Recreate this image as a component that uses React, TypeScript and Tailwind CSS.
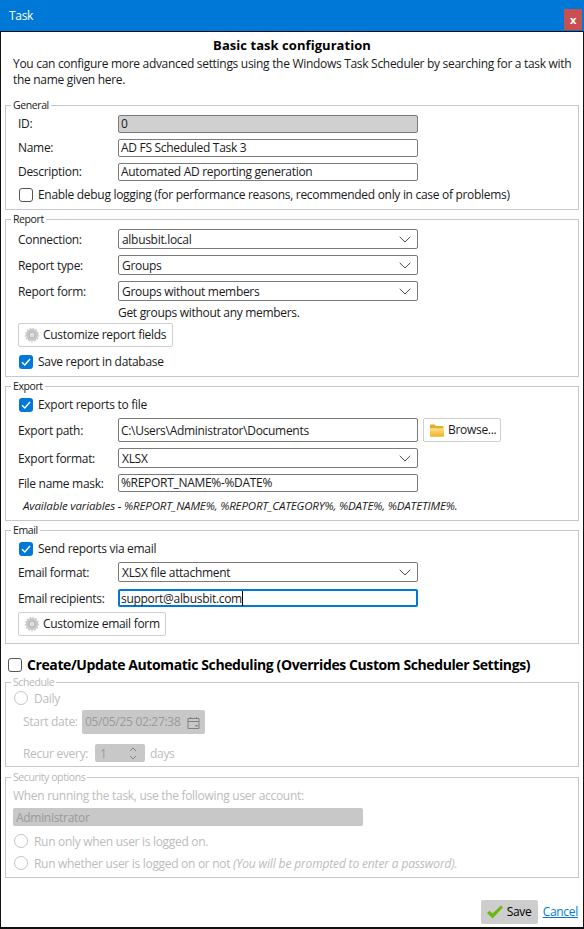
const font = "font-['Open_Sans',sans-serif]";

function Gear() {
  return (
    <svg width="16" height="16" viewBox="0 0 16 16" className="shrink-0">
      <circle cx="8" cy="8" r="6" fill="#c4c4c4" stroke="#cecece" strokeWidth="2.4" strokeDasharray="1.6 1.2" />
      <circle cx="8" cy="8" r="5" fill="#c8c8c8" />
      <circle cx="8" cy="8" r="3" fill="#dedede" stroke="#b4b4b4" strokeWidth="1" />
    </svg>
  );
}

function Folder() {
  return (
    <svg width="16" height="16" viewBox="0 0 16 16" className="shrink-0">
      <defs>
        <linearGradient id="fold" x1="0" y1="0" x2="0" y2="1">
          <stop offset="0" stopColor="#ffe28a" />
          <stop offset="1" stopColor="#f0b020" />
        </linearGradient>
      </defs>
      <path d="M1 3.5a1 1 0 0 1 1-1h3.6l1.4 1.6h6.6a1 1 0 0 1 1 1V14H1z" fill="#e3ad2c" />
      <path d="M1 6.2h14V14a.8.8 0 0 1-.8.8H1.8A.8.8 0 0 1 1 14z" fill="url(#fold)" />
    </svg>
  );
}

function GreenCheck() {
  return (
    <svg width="18" height="16" viewBox="0 0 18 16" className="shrink-0">
      <path d="M1 9l2.6-2.2 2.8 2.6L15 1.5l2 1.8L6.6 14.5z" fill="#6cb80e" />
    </svg>
  );
}

function Chevron() {
  return (
    <svg width="12" height="7" viewBox="0 0 12 7" className="shrink-0">
      <path d="M.7.8 6 6l5.3-5.2" fill="none" stroke="#4a4a4a" strokeWidth="1" />
    </svg>
  );
}

function CheckBox({ checked }: { checked?: boolean }) {
  if (checked) {
    return (
      <span className="w-[14px] h-[14px] rounded-[3px] bg-[#0078d7] flex items-center justify-center shrink-0">
        <svg width="10" height="10" viewBox="0 0 10 10">
          <path d="M1 5.2 3.8 8 9 2" fill="none" stroke="#fff" strokeWidth="1.4" />
        </svg>
      </span>
    );
  }
  return <span className="w-[14px] h-[14px] rounded-[3px] border border-[#555] bg-white shrink-0" />;
}

function CheckRow({ label, checked, className }: { label: string; checked?: boolean; className?: string }) {
  return (
    <div className={"flex items-center h-4 gap-[5px] ml-px " + (className ?? "")}>
      <CheckBox checked={checked} />
      <span>{label}</span>
    </div>
  );
}

function Radio({ children, className }: { children: React.ReactNode; className?: string }) {
  return (
    <div className={"flex items-center h-4 gap-[6px] " + (className ?? "")}>
      <span className="w-[14px] h-[14px] rounded-full border border-[#c4c4c4] bg-white shrink-0" />
      <span className="pt-px">{children}</span>
    </div>
  );
}

function Row({ label, down, className, children }: { label: string; down?: boolean; className?: string; children: React.ReactNode }) {
  return (
    <div className={"flex items-center " + (className ?? "")}>
      <span className={"w-[100px] shrink-0 " + (down ? "pt-px" : "")}>{label}</span>
      {children}
    </div>
  );
}

function TextField({ value, disabled, focused, tall }: { value: string; disabled?: boolean; focused?: boolean; tall?: boolean }) {
  const look = focused
    ? "border-2 border-[#0078d7] pl-[1px]"
    : disabled
      ? "border border-[#7a7a7a] bg-[#d0d0d0] pl-[2px]"
      : "border border-[#7a7a7a] pl-[2px]";
  return (
    <div className={"w-[300px] rounded-[2px] flex items-center " + (tall ? "h-6 " : "h-[18px] ") + look}>
      <span className={tall || focused ? "pt-px" : ""}>{value}</span>
      {focused && <span className="w-px h-[15px] bg-black" />}
    </div>
  );
}

function SelectField({ value }: { value: string }) {
  return (
    <div className="w-[300px] h-5 rounded-[2px] border border-[#7a7a7a] flex items-center justify-between pl-[3px] pr-[6px]">
      <span className="pt-px">{value}</span>
      <Chevron />
    </div>
  );
}

function Button({ icon, label, className }: { icon: React.ReactNode; label: string; className?: string }) {
  return (
    <div className={"h-6 rounded-[2px] border border-[#d0d0d0] flex items-center gap-[3px] px-[5px] whitespace-nowrap " + (className ?? "")}>
      {icon}
      <span>{label}</span>
    </div>
  );
}

function Group({ title, className, muted, children }: { title: string; className?: string; muted?: boolean; children: React.ReactNode }) {
  return (
    <fieldset className={"border border-[#c8c8c8] px-3 " + (className ?? "")}>
      <legend className={"ml-[-7px] px-[2px] text-[10.5px] tracking-[-0.4px] leading-[14px] " + (muted ? "text-[#b8b8b8]" : "")}>{title}</legend>
      {children}
    </fieldset>
  );
}

export default function App() {
  return (
    <div className={"w-[584px] h-[929px] bg-white flex flex-col text-[12px] leading-4 tracking-[-0.3px] text-[#1a1a1a] " + font}>
      <div className="h-[31px] bg-[#0078d7] flex justify-between items-start pl-[9px] pr-[2px] shrink-0">
        <span className="text-white mt-2">Task</span>
        <div className="w-[18px] h-[21px] mt-[9px] bg-[#c75050] text-white font-bold flex items-center justify-center text-[11px]">x</div>
      </div>

      <div className="flex-1 flex flex-col border-2 border-t-[1px] border-[#111] border-x-[1px] px-1 min-h-0">
        <h1 className="text-center font-bold text-[13px] leading-4 tracking-[0.05px] text-black mt-[5px]">Basic task configuration</h1>
        <p className="ml-2 mt-[3px] mb-[10px]">
          You can configure more advanced settings using the Windows Task Scheduler by searching for a task with the name given here.
        </p>

        <Group title="General" className="pb-[6px]">
          <Row label="ID:" className="mt-[3px]">
            <TextField value="0" disabled />
          </Row>
          <Row label="Name:" className="mt-[6px]">
            <TextField value="AD FS Scheduled Task 3" />
          </Row>
          <Row label="Description:" className="mt-[6px]">
            <TextField value="Automated AD reporting generation" />
          </Row>
          <CheckRow label="Enable debug logging (for performance reasons, recommended only in case of problems)" className="mt-[6px]" />
        </Group>

        <Group title="Report" className="mt-[2px] pb-[6px]">
          <Row label="Connection:" down className="mt-[3px]">
            <SelectField value="albusbit.local" />
          </Row>
          <Row label="Report type:" down className="mt-[6px]">
            <SelectField value="Groups" />
          </Row>
          <Row label="Report form:" down className="mt-[6px]">
            <SelectField value="Groups without members" />
          </Row>
          <p className="ml-[100px] mt-1">Get groups without any members.</p>
          <Button icon={<Gear />} label="Customize report fields" className="w-[155px] mt-[2px]" />
          <CheckRow label="Save report in database" checked className="mt-[7px]" />
        </Group>

        <Group title="Export" className="mt-[2px] pb-[6px]">
          <CheckRow label="Export reports to file" checked className="mt-1" />
          <Row label="Export path:" down className="mt-[5px]">
            <TextField value="C:\Users\Administrator\Documents" tall />
            <Button icon={<Folder />} label="Browse..." className="w-[78px] ml-[5px]" />
          </Row>
          <Row label="Export format:" down className="mt-[6px]">
            <SelectField value="XLSX" />
          </Row>
          <Row label="File name mask:" down className="mt-[6px]">
            <TextField value="%REPORT_NAME%-%DATE%" />
          </Row>
          <p className="italic ml-[5px] mt-[6px] text-[11.5px] tracking-[-0.15px]">Available variables - %REPORT_NAME%, %REPORT_CATEGORY%, %DATE%, %DATETIME%.</p>
        </Group>

        <Group title="Email" className="mt-[2px] pb-[7px]">
          <CheckRow label="Send reports via email" checked className="mt-1" />
          <Row label="Email format:" down className="mt-[5px]">
            <SelectField value="XLSX file attachment" />
          </Row>
          <Row label="Email recipients:" down className="mt-[7px]">
            <TextField value="support@albusbit.com" focused />
          </Row>
          <Button icon={<Gear />} label="Customize email form" className="w-[148px] mt-[5px]" />
        </Group>

        <div className="flex items-center h-4 gap-[5px] mt-[13px] mb-[2px] ml-[3px] font-bold text-[14px] text-black tracking-[-0.4px]">
          <CheckBox />
          <span>Create/Update Automatic Scheduling (Overrides Custom Scheduler Settings)</span>
        </div>

        <Group title="Schedule" muted className="pb-1 text-[#bcbcbc]">
          <Radio className="mt-px -ml-[4px]">Daily</Radio>
          <div className="flex items-center mt-1">
            <span className="w-[59px] ml-[5px] shrink-0">Start date:</span>
            <div className="w-[123px] h-6 rounded-[2px] bg-[#c8c8c8] text-[#9a9a9a] flex items-center justify-between pl-[3px] pr-[5px]">
              <span>05/05/25 02:27:38</span>
              <svg width="13" height="13" viewBox="0 0 13 13" fill="none" stroke="#808080" strokeWidth="1">
                <path d="M1 2.5h11v10H1zM1 5.5h11M3.5 1v2M9.5 1v2" />
                <path d="M8.5 9h2v1.5h-2z" fill="#808080" stroke="none" />
              </svg>
            </div>
          </div>
          <div className="flex items-center mt-[10px]">
            <span className="w-[72px] ml-[5px] shrink-0 pt-[2px]">Recur every:</span>
            <div className="w-[50px] h-[18px] rounded-[2px] bg-[#c8c8c8] text-[#9a9a9a] flex items-center justify-between pl-[5px] pr-2">
              <span className="pt-px">1</span>
              <svg width="8" height="15" viewBox="0 0 8 15" fill="none" stroke="#808080" strokeWidth="1">
                <path d="M1 5 4 2l3 3M1 10l3 3 3-3" />
              </svg>
            </div>
            <span className="ml-[5px] pt-[2px]">days</span>
          </div>
        </Group>

        <Group title="Security options" muted className="mt-[3px] pb-[6px] text-[#bcbcbc]">
          <p className="mt-[3px] -ml-[5px] pt-px -mb-px">When running the task, use the following user account:</p>
          <div className="w-[350px] h-[18px] -ml-[5px] mt-[5px] rounded-[2px] bg-[#c8c8c8] text-[#9a9a9a] flex items-center pl-[3px] pt-px">Administrator</div>
          <Radio className="mt-[7px] -ml-[4px]">Run only when user is logged on.</Radio>
          <Radio className="mt-[6px] -ml-[4px]">
            Run whether user is logged on or not <i className="tracking-[-0.15px]">(You will be prompted to enter a password).</i>
          </Radio>
        </Group>

        <div className="flex-1" />
        <div className="flex items-center justify-end gap-[5px] mb-[3px] pr-[1px]">
          <div className="w-[57px] h-6 rounded-[2px] bg-[#cdcdcd] flex items-center gap-[3px] pl-[5px] text-black">
            <GreenCheck />
            <span>Save</span>
          </div>
          <a className="text-[#0078d7] underline">Cancel</a>
        </div>
      </div>
    </div>
  );
}
